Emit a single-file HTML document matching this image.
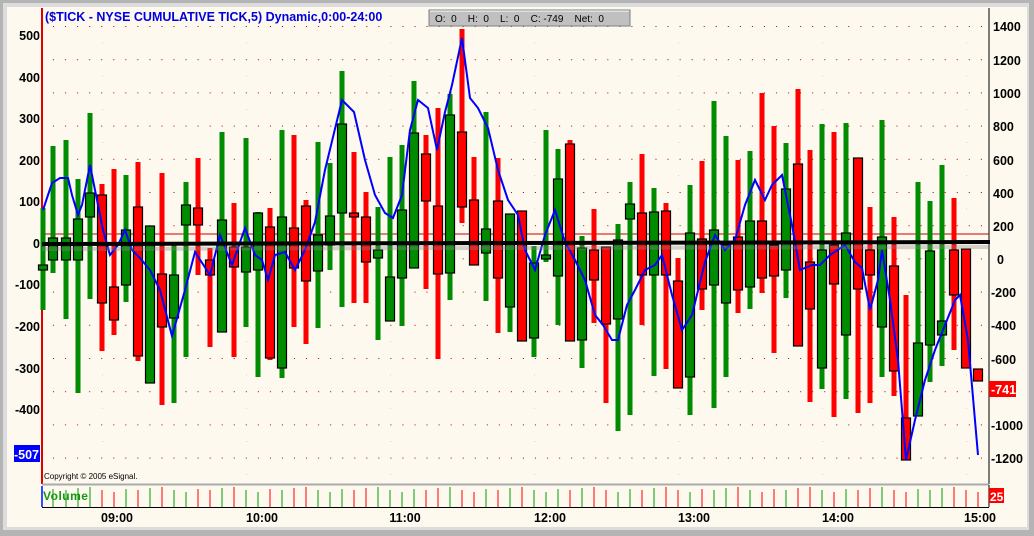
<!DOCTYPE html>
<html><head><meta charset="utf-8"><style>
html,body{margin:0;padding:0;background:#b4b4b4;}
#w{position:absolute;left:0;top:0;width:1034px;height:536px;overflow:hidden;background:#b4b4b4;}
#in{position:absolute;left:3px;top:3px;width:1026px;height:527px;background:#dcdcdc;}
#c{position:absolute;left:7px;top:7px;width:1020px;height:520px;background:#fdf9ee;}
svg{position:absolute;left:0;top:0;}
text{font-family:"Liberation Sans",Arial,sans-serif;}
</style></head><body>
<div id="w"><div id="in"></div><div id="c"></div>
<svg id="s" width="1034" height="536" viewBox="0 0 1034 536">
<defs>
<pattern id="dots" x="42" y="26" width="12.05" height="33.2" patternUnits="userSpaceOnUse"><rect x="11" y="0" width="1" height="1" fill="#a00000"/></pattern>
<pattern id="vd" x="0" y="10" width="1" height="33.2" patternUnits="userSpaceOnUse"><rect x="0" y="33" width="1" height="1" fill="#a00000"/></pattern>
</defs>
<rect x="42" y="26" width="946" height="445" fill="url(#dots)"/>
<g id="vlines"></g>
<line x1="42" y1="8" x2="42" y2="484" stroke="#e00000" stroke-width="2"/>
<line x1="989" y1="8" x2="989" y2="484" stroke="#000" stroke-width="1"/>
<line x1="42" y1="484.5" x2="989" y2="484.5" stroke="#aaa" stroke-width="2"/>
<line x1="42" y1="234" x2="989" y2="234" stroke="#d00000" stroke-width="1"/>
<g id="bars"></g>
<polyline id="blue" fill="none" stroke="#0000ff" stroke-width="2" points="43,210 52,183 60,178 68,178 72,195 78,215 82,205 90,165 97,200 103,230 110,255 118,245 125,230 132,250 140,258 150,270 160,290 172,336 185,290 195,252 210,275 220,235 232,265 245,228 255,255 262,260 268,280 275,255 285,252 295,270 305,250 315,222 325,170 342,100 354,112 365,160 375,195 385,213 393,218 402,195 410,130 418,100 428,108 437,150 445,112 452,85 462,38 470,98 478,108 488,128 498,170 508,200 518,215 525,250 535,270 545,235 555,210 565,242 575,260 585,280 595,315 603,325 612,340 618,340 627,305 635,290 645,270 655,265 662,255 672,295 682,330 692,315 705,262 715,235 725,250 735,240 745,205 755,180 765,200 772,185 782,175 792,225 800,270 812,265 820,265 830,255 845,245 855,262 862,268 870,310 878,280 882,250 890,300 898,360 906,460 915,420 925,380 935,350 945,325 955,300 960,295 968,340 978,455"/>
<line x1="42" y1="244" x2="990" y2="242" stroke="#000" stroke-width="4"/>
<line x1="42" y1="249" x2="990" y2="247" stroke="#888" stroke-width="4" opacity="0.35"/>
<g id="vol"></g>
<line x1="42" y1="486" x2="42" y2="507" stroke="#3050ff" stroke-width="2"/>
<line x1="42" y1="507.5" x2="989" y2="507.5" stroke="#000" stroke-width="1"/>
<line x1="989" y1="485" x2="989" y2="507" stroke="#000" stroke-width="1"/>
<text x="45" y="21" font-size="12.5" font-weight="bold" fill="#0000e0">($TICK - NYSE CUMULATIVE TICK,5) Dynamic,0:00-24:00</text>
<rect x="429" y="10" width="201" height="16" fill="#c0c0c0" stroke="#808080"/>
<line x1="430" y1="11" x2="629" y2="11" stroke="#fff"/>
<text x="435" y="22" font-size="10" fill="#000" xml:space="preserve">O:  0    H:  0    L:  0    C: -749    Net:  0</text>
<g font-size="12.5" font-weight="bold" fill="#000" text-anchor="end">
<text x="40" y="40">500</text><text x="40" y="82">400</text><text x="40" y="123">300</text><text x="40" y="165">200</text><text x="40" y="206">100</text><text x="40" y="248">0</text><text x="40" y="289">-100</text><text x="40" y="331">-200</text><text x="40" y="373">-300</text><text x="40" y="414">-400</text>
</g>
<rect x="14" y="445" width="26" height="17" fill="#0000ff"/>
<text x="39" y="459" font-size="12.5" font-weight="bold" fill="#fff" text-anchor="end">-507</text>
<g font-size="12.5" font-weight="bold" fill="#000">
<text x="993" y="31">1400</text><text x="993" y="65">1200</text><text x="993" y="98">1000</text><text x="993" y="131">800</text><text x="993" y="165">600</text><text x="993" y="198">400</text><text x="993" y="231">200</text><text x="997" y="264">0</text><text x="991" y="297">-200</text><text x="991" y="330">-400</text><text x="991" y="364">-600</text><text x="991" y="397">-800</text><text x="991" y="430">-1000</text><text x="991" y="463">-1200</text>
</g>
<rect x="989" y="381" width="27" height="16" fill="#ff0000"/>
<text x="991" y="394" font-size="12.5" font-weight="bold" fill="#fff">-741</text>
<text x="44" y="479" font-size="8" fill="#000">Copyright © 2005 eSignal.</text>
<text x="43" y="500" font-size="12" font-weight="bold" fill="#119911" letter-spacing="0.5">Volume</text>
<rect x="989" y="488" width="15" height="15" fill="#ff0000"/>
<text x="990" y="501" font-size="12" font-weight="bold" fill="#fff">25</text>
<g font-size="12.5" font-weight="bold" fill="#000" text-anchor="middle">
<text x="117" y="522">09:00</text><text x="262" y="522">10:00</text><text x="405" y="522">11:00</text><text x="550" y="522">12:00</text><text x="694" y="522">13:00</text><text x="838" y="522">14:00</text><text x="980" y="522">15:00</text>
</g>
</svg></div>
<script>
var D=[
[43,'G',208,310,265,270],
[53,'G',146,273,238,260],[66,'G',140,319,238,260],[78,'G',179,393,219,260],[90,'G',113,299,193,217],[102,'R',184,351,195,303],[114,'R',169,335,287,320],[126,'G',175,302,230,285],[138,'R',162,361,207,356],[150,'G',226,383,226,383],[162,'R',173,405,274,327],[174,'G',245,403,275,318],[186,'G',182,357,205,225],[198,'R',158,275,208,225],[210,'R',248,347,260,275],[222,'G',132,332,220,332],[234,'R',203,357,247,267],[246,'G',138,327,247,272],[258,'G',212,377,213,270],[270,'R',208,360,227,358],[282,'G',130,378,217,368],[294,'R',135,327,228,268],[306,'R',200,344,206,281],[318,'G',142,328,235,271],[330,'G',163,270,216,245],[342,'G',71,307,124,213],[354,'R',152,303,213,217],[366,'R',192,303,217,262],[378,'G',207,340,250,258],[390,'G',157,321,277,321],[402,'G',145,326,210,278],[414,'G',81,268,133,268],[426,'R',135,289,154,201],[438,'R',108,359,206,274],[450,'G',94,300,115,273],[462,'R',29,223,132,207],[474,'R',157,265,200,265],[486,'G',112,301,229,253],[498,'R',158,333,201,278],[510,'G',214,332,214,307],
[522,'R',211,341,211,341],[534,'G',246,357,263,338],[546,'G',130,262,255,259],[558,'G',149,325,179,276],[570,'R',140,341,144,341],[582,'G',236,368,248,340],[594,'R',209,323,250,280],[606,'R',247,403,247,324],[618,'G',224,431,240,319],[630,'G',182,415,204,219],[642,'R',154,325,213,275],[654,'G',188,376,212,275],[666,'R',203,369,211,275],[678,'R',258,388,281,388],[690,'G',185,415,233,377],[702,'R',161,310,239,289],[714,'G',101,408,230,285],[726,'G',136,377,245,303],[738,'R',160,313,237,290],[750,'G',151,309,221,287],[762,'R',93,293,221,278],[774,'R',126,353,245,276],[786,'G',143,298,189,270],[798,'R',89,346,164,346],[810,'R',150,402,262,309],[822,'G',124,389,250,368],[834,'R',132,417,245,284],[846,'G',123,399,233,335],[858,'R',158,413,158,289],[870,'R',207,403,250,275],[882,'G',120,377,237,327],[894,'R',217,396,266,371],[906,'R',295,460,418,460],[918,'G',182,416,343,416],[930,'G',201,382,251,345],[942,'G',165,366,321,335],[954,'R',198,350,250,295],[966,'R',249,368,249,368],[978,'R',369,381,369,381]];
var h='',v='';
D.forEach(function(d,i){var x=d[0],c=d[1]=='G'?'#008c00':'#ff0000';
h+='<rect x="'+(x-2.5)+'" y="'+d[2]+'" width="5" height="'+(d[3]-d[2])+'" fill="'+c+'"/>';
if(d[5]-d[4]>1)h+='<rect x="'+(x-4.5)+'" y="'+d[4]+'" width="9" height="'+(d[5]-d[4])+'" fill="'+c+'" stroke="#000" stroke-width="1.2"/>';
if(i>0){var t=[492,489,490,488,487,490][i%6];v+='<line x1="'+x+'" y1="'+t+'" x2="'+x+'" y2="507" stroke="'+(d[1]=='G'?'#00a000':'#ff0000')+'" stroke-width="1"/>';}
});
document.getElementById('bars').innerHTML=h;
document.getElementById('vol').innerHTML=v;
var vl='';[102,246,390,534,678,822,966].forEach(function(x){vl+='<rect x="'+x+'" y="10" width="1" height="470" fill="url(#vd)"/>';});
document.getElementById('vlines').innerHTML=vl;
</script>
</body></html>
